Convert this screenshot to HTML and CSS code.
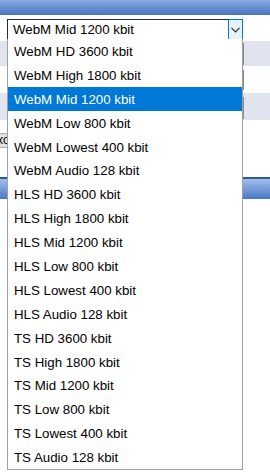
FILE: index.html
```html
<!DOCTYPE html>
<html>
<head>
<meta charset="utf-8">
<link rel="stylesheet" href="styles.css">
</head>
<body>
<div class="topbar"></div>
<div class="selrow">
  <div class="selwrap">
    <div class="select">
      <span class="seltext">WebM Mid 1200 kbit</span>
      <span class="arrow"><svg width="9" height="6" viewBox="0 0 9 6"><polyline points="0.5,0.8 4.5,4.8 8.5,0.8" fill="none" stroke="#333" stroke-width="1.2"/></svg></span>
    </div>
    <ul class="list">
      <li>WebM HD 3600 kbit</li>
      <li>WebM High 1800 kbit</li>
      <li class="sel">WebM Mid 1200 kbit</li>
      <li>WebM Low 800 kbit</li>
      <li>WebM Lowest 400 kbit</li>
      <li>WebM Audio 128 kbit</li>
      <li>HLS HD 3600 kbit</li>
      <li>HLS High 1800 kbit</li>
      <li>HLS Mid 1200 kbit</li>
      <li>HLS Low 800 kbit</li>
      <li>HLS Lowest 400 kbit</li>
      <li>HLS Audio 128 kbit</li>
      <li>TS HD 3600 kbit</li>
      <li>TS High 1800 kbit</li>
      <li>TS Mid 1200 kbit</li>
      <li>TS Low 800 kbit</li>
      <li>TS Lowest 400 kbit</li>
      <li>TS Audio 128 kbit</li>
    </ul>
  </div>
</div>
<div class="row gray r1"><div class="field f1"></div></div>
<div class="row r2"><div class="field f2"></div></div>
<div class="row gray r3"><div class="field f3"></div></div>
<div class="btnrow"><span class="btn">xo</span></div>
<div class="bluebar"></div>
</body>
</html>
```

FILE: styles.css
```css
html, body {
  margin: 0;
  padding: 0;
  background: #fff;
  font-family: "Liberation Sans", Arial, sans-serif;
  font-size: 13.3px;
  width: 270px;
  height: 474px;
  overflow: hidden;
}
.topbar {
  height: 15px;
  background: linear-gradient(#8aaae0, #4673c2);
}
.selrow {
  padding: 4px 0 0 7px;
  box-sizing: border-box;
  height: 26px;
}
.selwrap {
  position: relative;
  width: 236px;
  z-index: 2;
}
.select {
  height: 21px;
  box-sizing: border-box;
  border: 1px solid #2b2b2b;
  border-right: none;
  display: flex;
  align-items: center;
  background: #fff;
  position: relative;
}
.seltext {
  flex: 1;
  padding-left: 5px;
  color: #000;
  line-height: 19px;
}
.arrow {
  width: 15px;
  height: 21px;
  margin-top: -1px;
  margin-bottom: -1px;
  box-sizing: border-box;
  border: 1px solid #0078d7;
  background: #e5f1fb;
  display: flex;
  align-items: center;
  justify-content: center;
}
.arrow svg { display: block; margin-top: 1px; }
.list {
  position: absolute;
  left: 0;
  top: 20px;
  width: 236px;
  box-sizing: border-box;
  margin: 0;
  padding: 0;
  list-style: none;
  background: #fff;
  border: 1px solid #a0a0a0;
  border-top: none;
}
.list li {
  height: 23.9px;
  line-height: 25px;
  padding-left: 6px;
  color: #000;
  white-space: nowrap;
}
.list li.sel {
  background: #0078d7;
  color: #fff;
}
.row {
  position: relative;
  display: flex;
  justify-content: flex-end;
}
.gray { background: #dfe4ee; }
.r1 { height: 25px; }
.r2 { height: 27px; }
.r3 { height: 27px; }
.field {
  width: 1px;
  margin-right: 26px;
  background: #888;
}
.f1 { margin-top: 2px; height: 22px; }
.f2 { margin-top: 4px; height: 20px; }
.f3 { margin-top: 4px; height: 22px; }
.btnrow {
  height: 57px;
  padding-top: 13px;
  box-sizing: border-box;
}
.btn {
  display: block;
  width: 22px;
  margin-left: -14px;
  height: 15px;
  box-sizing: border-box;
  border: 1px solid #adadad;
  background: #e1e1e1;
  font-size: 12px;
  line-height: 13px;
  padding-left: 10px;
  color: #000;
  white-space: nowrap;
  overflow: hidden;
}
.bluebar {
  height: 22px;
  box-sizing: border-box;
  border-top: 2px solid #2c5a9f;
  background: linear-gradient(#a2bfec, #4a78c6);
}
```
